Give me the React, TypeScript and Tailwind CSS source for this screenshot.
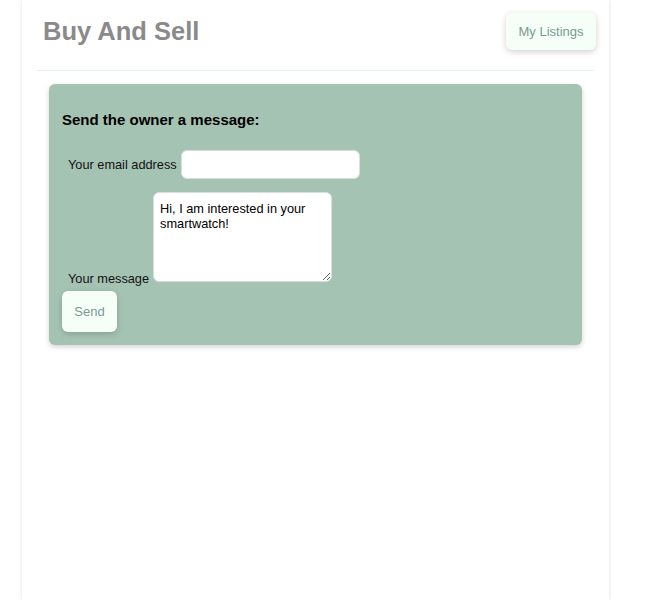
export default function App() {
  return (
    <div className="min-h-[600px] bg-white font-['Liberation_Sans',Arial,sans-serif]">
      <div className="ml-[22px] w-[587px] min-h-[600px] bg-white shadow-[0_0_4px_rgba(0,0,0,0.12)]">
        <header className="flex items-start justify-between pl-[21px] pr-[13px] pt-[13px]">
          <h1 className="mt-[4px] text-[25.5px] font-bold leading-[28px] text-[#8a8a8a]">Buy And Sell</h1>
          <button className="h-[37px] w-[90px] rounded-[6px] bg-[#f5fff7] text-[13px] text-[#7b9a96] shadow-[0_2px_6px_rgba(0,0,0,0.18)]">
            My Listings
          </button>
        </header>
        <div className="mx-[15px] mt-[20px] h-px bg-[#e3eeee]" />
        <section className="mx-[27px] mt-[13px] rounded-[6px] bg-[#a5c3b3] px-[13px] pb-[13px] pt-[27px] shadow-[0_2px_5px_rgba(0,0,0,0.18)]">
          <h3 className="text-[15px] font-bold leading-[18px] text-black">Send the owner a message:</h3>
          <form className="mt-[21px] flex flex-col items-start">
            <div className="flex items-center pl-[6px]">
              <label className="mr-[4px] text-[12.75px] text-[#111]">Your email address</label>
              <input
                type="email"
                className="h-[29px] w-[179px] rounded-[6px] border border-[#d8dedb] bg-white px-2 text-[13px] outline-none"
              />
            </div>
            <div className="mt-[13px] flex items-end pl-[6px]">
              <label className="mb-[-4px] mr-[4px] text-[12.75px] leading-[15px] text-[#111]">Your message</label>
              <textarea
                defaultValue="Hi, I am interested in your smartwatch!"
                className="h-[90px] w-[179px] rounded-[6px] border border-[#d8dedb] bg-white px-[6px] py-[8px] text-[12.75px] leading-[15px] text-black outline-none"
              />
            </div>
            <button
              type="button"
              className="mt-[9px] h-[41px] w-[55px] rounded-[6px] bg-[#f5fff7] text-[13px] text-[#7b9a96] shadow-[0_2px_6px_rgba(0,0,0,0.18)]"
            >
              Send
            </button>
          </form>
        </section>
      </div>
    </div>
  )
}
